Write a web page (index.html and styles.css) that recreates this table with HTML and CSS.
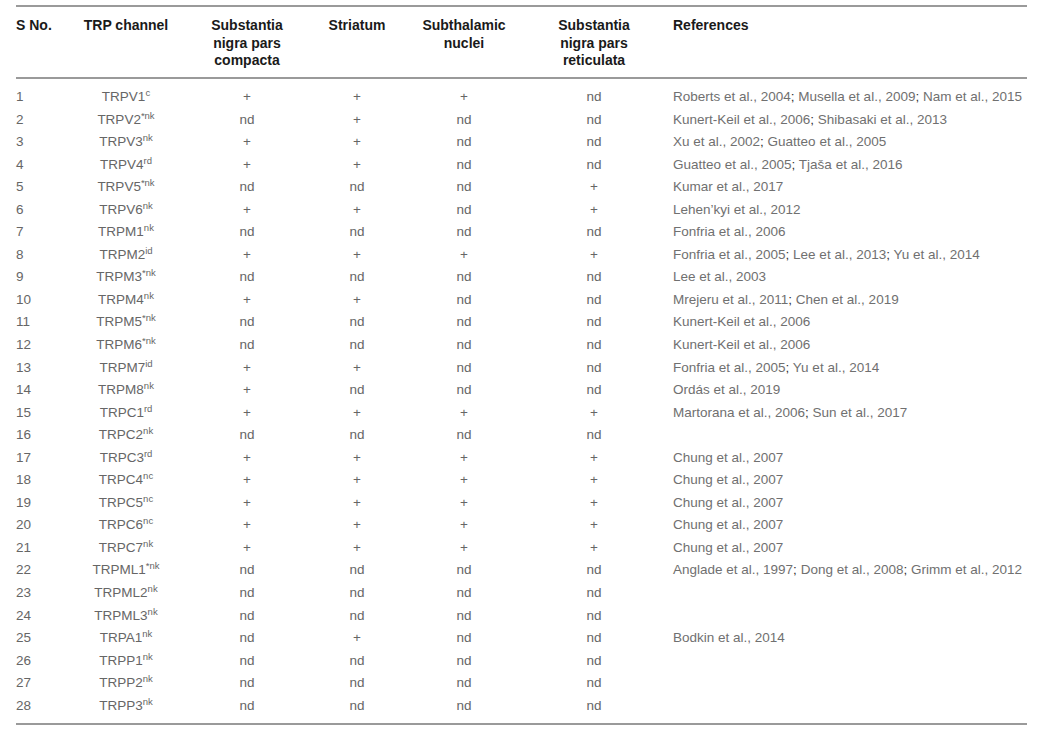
FILE: index.html
```html
<!DOCTYPE html>
<html>
<head>
<meta charset="utf-8">
<link rel="stylesheet" href="styles.css">
</head>
<body>
<table class="trp">
<colgroup>
<col class="c-no"><col class="c-ch"><col class="c-snc"><col class="c-str"><col class="c-stn"><col class="c-snr"><col class="c-ref">
</colgroup>
<thead>
<tr>
<th class="left">S No.</th>
<th>TRP channel</th>
<th>Substantia<br>nigra pars<br>compacta</th>
<th>Striatum</th>
<th>Subthalamic<br>nuclei</th>
<th>Substantia<br>nigra pars<br>reticulata</th>
<th class="left ref">References</th>
</tr>
</thead>
<tbody>
<tr><td class="left">1</td><td>TRPV1<sup>c</sup></td><td>+</td><td>+</td><td>+</td><td>nd</td><td class="ref">Roberts et al., 2004<b>;</b> Musella et al., 2009<b>;</b> Nam et al., 2015</td></tr>
<tr><td class="left">2</td><td>TRPV2<sup>*nk</sup></td><td>nd</td><td>+</td><td>nd</td><td>nd</td><td class="ref">Kunert-Keil et al., 2006<b>;</b> Shibasaki et al., 2013</td></tr>
<tr><td class="left">3</td><td>TRPV3<sup>nk</sup></td><td>+</td><td>+</td><td>nd</td><td>nd</td><td class="ref">Xu et al., 2002<b>;</b> Guatteo et al., 2005</td></tr>
<tr><td class="left">4</td><td>TRPV4<sup>rd</sup></td><td>+</td><td>+</td><td>nd</td><td>nd</td><td class="ref">Guatteo et al., 2005<b>;</b> Tjaša et al., 2016</td></tr>
<tr><td class="left">5</td><td>TRPV5<sup>*nk</sup></td><td>nd</td><td>nd</td><td>nd</td><td>+</td><td class="ref">Kumar et al., 2017</td></tr>
<tr><td class="left">6</td><td>TRPV6<sup>nk</sup></td><td>+</td><td>+</td><td>nd</td><td>+</td><td class="ref">Lehen’kyi et al., 2012</td></tr>
<tr><td class="left">7</td><td>TRPM1<sup>nk</sup></td><td>nd</td><td>nd</td><td>nd</td><td>nd</td><td class="ref">Fonfria et al., 2006</td></tr>
<tr><td class="left">8</td><td>TRPM2<sup>id</sup></td><td>+</td><td>+</td><td>+</td><td>+</td><td class="ref">Fonfria et al., 2005<b>;</b> Lee et al., 2013<b>;</b> Yu et al., 2014</td></tr>
<tr><td class="left">9</td><td>TRPM3<sup>*nk</sup></td><td>nd</td><td>nd</td><td>nd</td><td>nd</td><td class="ref">Lee et al., 2003</td></tr>
<tr><td class="left">10</td><td>TRPM4<sup>nk</sup></td><td>+</td><td>+</td><td>nd</td><td>nd</td><td class="ref">Mrejeru et al., 2011<b>;</b> Chen et al., 2019</td></tr>
<tr><td class="left">11</td><td>TRPM5<sup>*nk</sup></td><td>nd</td><td>nd</td><td>nd</td><td>nd</td><td class="ref">Kunert-Keil et al., 2006</td></tr>
<tr><td class="left">12</td><td>TRPM6<sup>*nk</sup></td><td>nd</td><td>nd</td><td>nd</td><td>nd</td><td class="ref">Kunert-Keil et al., 2006</td></tr>
<tr><td class="left">13</td><td>TRPM7<sup>id</sup></td><td>+</td><td>+</td><td>nd</td><td>nd</td><td class="ref">Fonfria et al., 2005<b>;</b> Yu et al., 2014</td></tr>
<tr><td class="left">14</td><td>TRPM8<sup>nk</sup></td><td>+</td><td>nd</td><td>nd</td><td>nd</td><td class="ref">Ordás et al., 2019</td></tr>
<tr><td class="left">15</td><td>TRPC1<sup>rd</sup></td><td>+</td><td>+</td><td>+</td><td>+</td><td class="ref">Martorana et al., 2006<b>;</b> Sun et al., 2017</td></tr>
<tr><td class="left">16</td><td>TRPC2<sup>nk</sup></td><td>nd</td><td>nd</td><td>nd</td><td>nd</td><td class="ref"></td></tr>
<tr><td class="left">17</td><td>TRPC3<sup>rd</sup></td><td>+</td><td>+</td><td>+</td><td>+</td><td class="ref">Chung et al., 2007</td></tr>
<tr><td class="left">18</td><td>TRPC4<sup>nc</sup></td><td>+</td><td>+</td><td>+</td><td>+</td><td class="ref">Chung et al., 2007</td></tr>
<tr><td class="left">19</td><td>TRPC5<sup>nc</sup></td><td>+</td><td>+</td><td>+</td><td>+</td><td class="ref">Chung et al., 2007</td></tr>
<tr><td class="left">20</td><td>TRPC6<sup>nc</sup></td><td>+</td><td>+</td><td>+</td><td>+</td><td class="ref">Chung et al., 2007</td></tr>
<tr><td class="left">21</td><td>TRPC7<sup>nk</sup></td><td>+</td><td>+</td><td>+</td><td>+</td><td class="ref">Chung et al., 2007</td></tr>
<tr><td class="left">22</td><td>TRPML1<sup>*nk</sup></td><td>nd</td><td>nd</td><td>nd</td><td>nd</td><td class="ref">Anglade et al., 1997<b>;</b> Dong et al., 2008<b>;</b> Grimm et al., 2012</td></tr>
<tr><td class="left">23</td><td>TRPML2<sup>nk</sup></td><td>nd</td><td>nd</td><td>nd</td><td>nd</td><td class="ref"></td></tr>
<tr><td class="left">24</td><td>TRPML3<sup>nk</sup></td><td>nd</td><td>nd</td><td>nd</td><td>nd</td><td class="ref"></td></tr>
<tr><td class="left">25</td><td>TRPA1<sup>nk</sup></td><td>nd</td><td>+</td><td>nd</td><td>nd</td><td class="ref">Bodkin et al., 2014</td></tr>
<tr><td class="left">26</td><td>TRPP1<sup>nk</sup></td><td>nd</td><td>nd</td><td>nd</td><td>nd</td><td class="ref"></td></tr>
<tr><td class="left">27</td><td>TRPP2<sup>nk</sup></td><td>nd</td><td>nd</td><td>nd</td><td>nd</td><td class="ref"></td></tr>
<tr><td class="left">28</td><td>TRPP3<sup>nk</sup></td><td>nd</td><td>nd</td><td>nd</td><td>nd</td><td class="ref"></td></tr>
</tbody>
</table>
</body>
</html>
```
FILE: styles.css
```css
html, body {
  margin: 0;
  background: #ffffff;
}
body {
  padding: 5px 21px 0 16px;
  font-family: "Liberation Sans", Arial, Helvetica, sans-serif;
}
.trp {
  width: 1011px;
  table-layout: fixed;
  border-collapse: separate;
  border-spacing: 0;
}
.c-no { width: 54px; }
.c-ch { width: 112px; }
.c-snc { width: 130px; }
.c-str { width: 90px; }
.c-stn { width: 124px; }
.c-snr { width: 136px; }
.c-ref { width: 365px; }

.trp th {
  font-size: 14px;
  font-weight: bold;
  color: #1a1a1a;
  line-height: 17.5px;
  vertical-align: top;
  text-align: center;
  padding: 10px 0 7.5px 0;
  border-top: 2px solid #9a9a9a;
  border-bottom: 2px solid #9a9a9a;
}
.trp td {
  font-size: 13.5px;
  color: #666666;
  line-height: 22.55px;
  height: 22.55px;
  padding: 0;
  text-align: center;
  white-space: nowrap;
  vertical-align: middle;
}
.trp tbody tr:first-child td {
  padding-top: 7px;
}
.trp tbody tr:last-child td {
  padding-bottom: 5.5px;
  border-bottom: 2px solid #9a9a9a;
}
.trp .left {
  text-align: left;
}
.trp .ref {
  text-align: left;
  padding-left: 11px;
}
.trp td.ref {
  color: #707070;
}
.trp td.ref b {
  font-weight: normal;
  color: #333333;
}
.trp sup {
  font-size: 9.5px;
  line-height: 0;
  vertical-align: 5px;
}
```
